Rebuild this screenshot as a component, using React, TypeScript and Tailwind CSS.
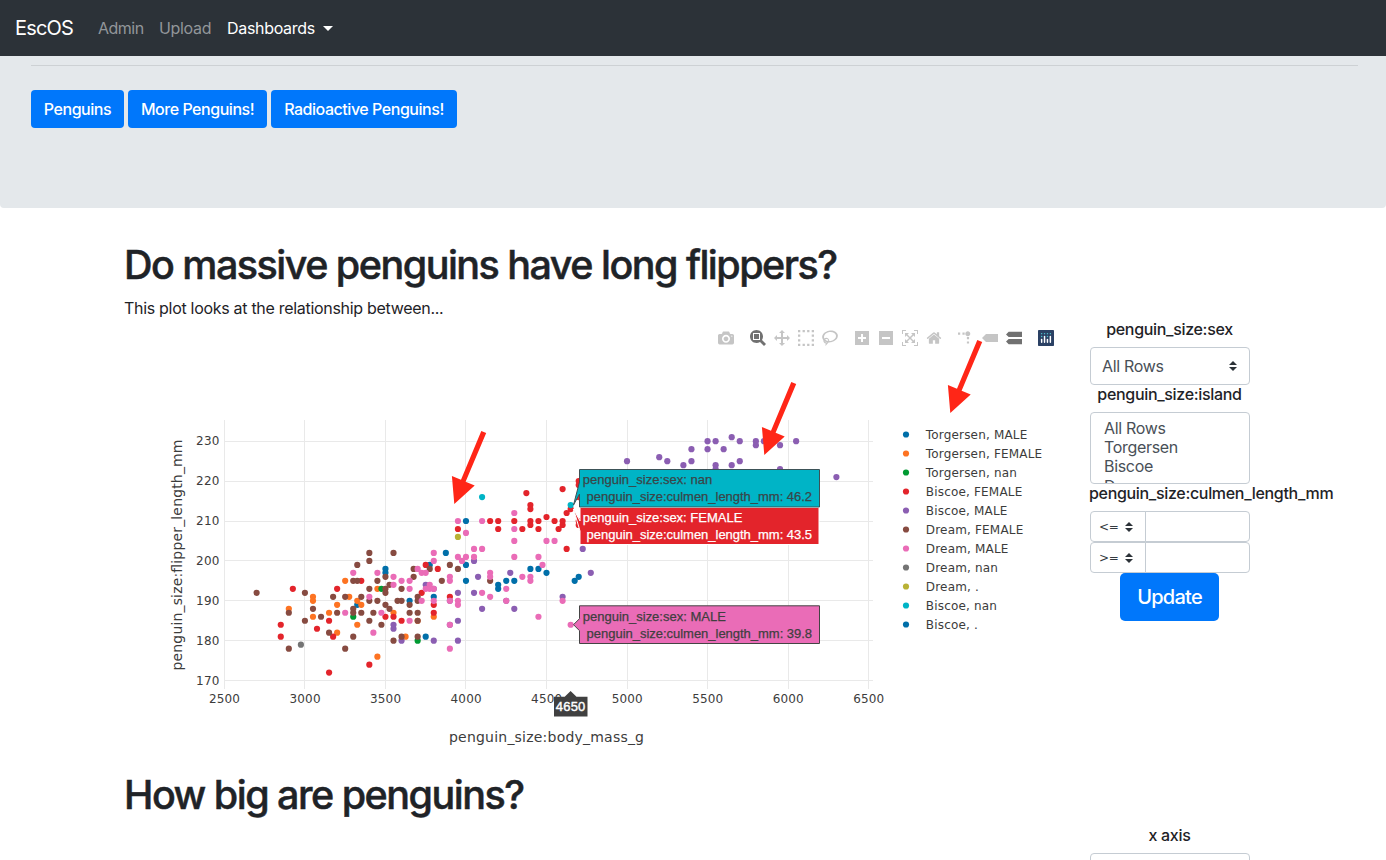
import React from "react";

type Series = { name: string; color: string; points: [number, number[]][] };

const BLUE = "#006fa9";
const ORANGE = "#fd7322";
const GREEN = "#009a32";
const RED = "#e3242b";
const PURPLE = "#8b5eb2";
const BROWN = "#874b41";
const PINK = "#ea6cb7";
const GREY = "#747474";
const OLIVE = "#b9b235";
const CYAN = "#00b4c6";

// Each point entry is [body mass in grams, [flipper lengths in mm]].
const series: Series[] = [
  {
    name: "Torgersen, MALE",
    color: BLUE,
    points: [
      [3325, [189]], [3500, [198, 197]], [3650, [190]], [3750, [181]], [3775, [199]], [3800, [191]],
      [3875, [202]], [4000, [210, 199, 195]], [4200, [194, 193]], [4250, [195]], [4300, [195]],
      [4400, [198]], [4450, [198]], [4500, [197]], [4675, [195]], [4700, [196]],
    ],
  },
  {
    name: "Torgersen, FEMALE",
    color: ORANGE,
    points: [
      [2900, [188]], [3050, [191, 190, 186]], [3150, [187]], [3200, [189, 182]], [3250, [195]],
      [3275, [191]], [3325, [190, 184]], [3350, [189]], [3450, [193, 176]], [3550, [187]],
      [3625, [181]], [3700, [185]], [3800, [186]],
    ],
  },
  { name: "Torgersen, nan", color: GREEN, points: [[3300, [186]], [3475, [193]], [3700, [180]]] },
  {
    name: "Biscoe, FEMALE",
    color: RED,
    points: [
      [2850, [184, 181]], [2925, [193]], [3075, [183]], [3150, [185, 172]], [3175, [181]], [3200, [193]],
      [3350, [195]], [3400, [174]], [3500, [186]], [3550, [186]], [3600, [185]], [3725, [192]],
      [3750, [199]], [3800, [189, 187]], [3825, [198]], [3900, [191]], [3950, [208]], [4150, [210]],
      [4200, [210, 208]], [4300, [210]], [4350, [208]], [4375, [217]], [4400, [214, 213, 210, 209]],
      [4450, [210, 208]], [4500, [211]], [4550, [210]], [4575, [208]], [4600, [218, 210, 209]],
      [4625, [212, 203]], [4650, [213]], [4700, [220, 219, 216, 210, 209]],
    ],
  },
  {
    name: "Biscoe, MALE",
    color: PURPLE,
    points: [
      [3550, [184, 183]], [3600, [180]], [3750, [194]], [3800, [193, 180]], [3900, [190, 184]],
      [3950, [192, 185, 180]], [4050, [200, 192]], [4075, [196]], [4100, [188]], [4250, [190]],
      [4275, [197]], [4300, [188]], [4600, [191]], [4725, [203]], [4775, [197]], [5000, [225]],
      [5200, [226]], [5250, [225]], [5350, [224]], [5400, [228, 225]], [5500, [230, 228]],
      [5550, [230, 224, 223]], [5600, [228]], [5650, [231, 224]], [5700, [230, 225]],
      [5800, [230, 229]], [5850, [230]], [5950, [229, 223]], [6050, [230]], [6300, [221]],
    ],
  },
  {
    name: "Dream, FEMALE",
    color: BROWN,
    points: [
      [2700, [192]], [2900, [187, 178]], [3000, [192, 185]], [3050, [188]], [3100, [186]],
      [3150, [182]], [3175, [191]], [3200, [187]], [3250, [191, 178]], [3300, [195, 188, 187, 181]],
      [3325, [199, 195]], [3350, [191, 187]], [3400, [202, 200, 193, 190, 185]], [3425, [187]],
      [3450, [195, 190]], [3475, [184]], [3500, [196, 193, 192, 189]], [3525, [194, 188]],
      [3550, [202, 180]], [3575, [190]], [3600, [193, 190, 181]], [3650, [189, 187]],
      [3675, [198, 196]], [3700, [191, 190, 187, 185, 181]], [3775, [198]], [3850, [195]],
      [3900, [199]], [3950, [198]], [4150, [195]],
    ],
  },
  {
    name: "Dream, MALE",
    color: PINK,
    points: [
      [3250, [187]], [3300, [197]], [3400, [191]], [3425, [182]], [3450, [197]], [3475, [187]],
      [3550, [196, 194]], [3600, [195]], [3650, [195, 193, 185]], [3700, [198]], [3725, [197, 190]],
      [3750, [197, 193]], [3775, [194, 193]], [3800, [202, 200, 193, 190]],
      [3900, [196, 195, 190, 184, 178]], [3950, [210, 201, 190, 189]], [3975, [200]],
      [4000, [207, 201]], [4050, [203, 201]], [4100, [210, 203, 192]], [4150, [197, 196, 191]],
      [4250, [193, 190]], [4300, [212, 208, 205, 201]], [4350, [196]], [4400, [196, 195]],
      [4450, [201, 186]], [4475, [199]], [4500, [205]], [4550, [205]], [4600, [190]], [4650, [184]],
    ],
  },
  { name: "Dream, nan", color: GREY, points: [[2975, [179]]] },
  { name: "Dream, .", color: OLIVE, points: [[3950, [206]]] },
  { name: "Biscoe, nan", color: CYAN, points: [[4100, [216]], [4650, [214]]] },
  { name: "Biscoe, .", color: BLUE, points: [] },
];

const px = (mass: number) => 224.4 + (mass - 2500) * 0.16105;
const py = (flipper: number) => 441.2 + (230 - flipper) * 3.99;

const massTicks = [2500, 3000, 3500, 4000, 4500, 5000, 5500, 6000, 6500];
const flipperTicks = [170, 180, 190, 200, 210, 220, 230];

function Arrow({ x, y }: { x: number; y: number }) {
  return (
    <path
      transform={`translate(${x} ${y})`}
      fill="#ff2617"
      d="M0 0L-2.4-28L6.7-24.2L27-73L31.9-71L11.3-22.2L20.4-18.4Z"
    />
  );
}

function HoverLabel(props: {
  y: number;
  fill: string;
  stroke: string;
  text: string;
  sex: string;
  length: string;
  sexWidth: number;
  pointer: string;
}) {
  const { y, fill, stroke, text, sex, length, sexWidth, pointer } = props;
  return (
    <g fontFamily="'Liberation Sans', Arial, sans-serif" fontSize="13">
      <path d={pointer} fill={fill} stroke={stroke} />
      <g fill={text} stroke={text} strokeWidth="0.25">
        <text x="582.8" y={y + 15} textLength={sexWidth}>
          penguin_size:sex: {sex}
        </text>
        <text x="586.6" y={y + 32} textLength="225.5">
          penguin_size:culmen_length_mm: {length}
        </text>
      </g>
    </g>
  );
}

function Chart() {
  return (
    <svg
      className="block h-[440px] w-[935px] tracking-normal"
      viewBox="125 320 935 440"
      fontFamily="'DejaVu Sans', Verdana, sans-serif"
      fill="#3c3c3c"
    >
      <g stroke="#e9e9e9" strokeWidth="1">
        {massTicks.map((m) => (
          <line key={m} x1={Math.floor(px(m)) + 0.5} x2={Math.floor(px(m)) + 0.5} y1="420" y2="689" />
        ))}
        {flipperTicks.map((f) => (
          <line key={f} x1="224" x2="873" y1={Math.floor(py(f)) + 0.5} y2={Math.floor(py(f)) + 0.5} />
        ))}
      </g>
      {series.map((s) => (
        <g key={s.name} fill={s.color}>
          {s.points.flatMap(([m, fs]) =>
            fs.map((f) => <circle key={`${m}-${f}`} cx={px(m)} cy={py(f)} r="3.1" />)
          )}
        </g>
      ))}
      <g fontSize="12">
        {massTicks.map((m) => (
          <text key={m} x={px(m) - 15.4} y="703" textLength="31">
            {m}
          </text>
        ))}
        {flipperTicks.map((f) => (
          <text key={f} x="196" y={py(f) + 4.2} textLength="23.5">
            {f}
          </text>
        ))}
      </g>
      <g fontSize="14">
        <text x="449" y="742" textLength="195">
          penguin_size:body_mass_g
        </text>
        <text transform="translate(181.5 670.5) rotate(-90)" textLength="231">
          penguin_size:flipper_length_mm
        </text>
      </g>
      {series.map((s, i) => (
        <g key={s.name} fontSize="12">
          <circle cx="906" cy={434.5 + i * 19} r="3.1" fill={s.color} />
          <text x="925.8" y={439 + i * 19} letterSpacing="0.18">
            {s.name}
          </text>
        </g>
      ))}
      <HoverLabel
        y={507}
        fill={RED}
        stroke="#fff"
        text="#fff"
        sex="FEMALE"
        length="43.5"
        sexWidth={159.5}
        pointer="M573.5 509L580 521V507.5H819V544.5H580V531Z"
      />
      <HoverLabel
        y={469}
        fill={CYAN}
        stroke="#3c5257"
        text="#3a4548"
        sex="nan"
        length="46.2"
        sexWidth={129.5}
        pointer="M573.5 505L579.5 482V469.5H819.5V507H579.5V494Z"
      />
      <HoverLabel
        y={606}
        fill={PINK}
        stroke="#444"
        text="#3f3f3f"
        sex="MALE"
        length="39.8"
        sexWidth={143}
        pointer="M573.5 624.7L579.5 618.7V605.8H819.5V643.5H579.5V630.7Z"
      />
      <path d="M570.6 691L576.5 696.8H587.5V716.5H554V696.8H564.7Z" fill="#404040" />
      <text
        x="555.8"
        y="711.3"
        textLength="29.5"
        fill="#fff"
        stroke="#fff"
        strokeWidth="0.4"
        fontSize="13"
        fontFamily="'Liberation Sans', Arial, sans-serif"
      >
        4650
      </text>
      <Arrow x={454.3} y={504} />
      <Arrow x={764.3} y={455} />
      <Arrow x={950.3} y={413} />
    </svg>
  );
}

const icons = {
  camera: "m500 450c-83 0-150-67-150-150 0-83 67-150 150-150 83 0 150 67 150 150 0 83-67 150-150 150z m400 150h-120c-16 0-34 13-39 29l-31 93c-6 15-23 28-40 28h-340c-16 0-34-13-39-28l-31-94c-6-15-23-28-40-28h-120c-55 0-100-45-100-100v-450c0-55 45-100 100-100h800c55 0 100 45 100 100v450c0 55-45 100-100 100z m-400-550c-138 0-250 112-250 250 0 138 112 250 250 250 138 0 250-112 250-250 0-138-112-250-250-250z m365 380c-19 0-35 16-35 35 0 19 16 35 35 35 19 0 35-16 35-35 0-19-16-35-35-35z",
  zoom: "m1000-25l-250 251c40 63 63 138 63 218 0 224-182 406-407 406-224 0-406-182-406-406s183-406 407-406c80 0 155 22 218 62l250-250 125 125z m-812 250l0 438 437 0 0-438-437 0z m62 375l313 0 0-312-313 0 0 312z",
  pan: "m1000 350l-187 188 0-125-250 0 0 250 125 0-188 187-187-187 125 0 0-250-250 0 0 125-188-188 186-187 0 125 252 0 0-250-125 0 187-188 188 188-125 0 0 250 250 0 0-126 187 188z",
  select: "M0 850h143v-143h-143z M286 850h143v-143h-143z M571 850h143v-143h-143z M857 850h143v-143h-143z M0 564h143v-143h-143z M857 564h143v-143h-143z M0 279h143v-143h-143z M857 279h143v-143h-143z M0-7h143v-143h-143z M286-7h143v-143h-143z M571-7h143v-143h-143z M857-7h143v-143h-143z",
  lasso: "m1018 538c-36 207-290 336-568 286-277-48-473-256-436-463 10-57 36-108 76-151-13-66 11-137 68-183 34-28 75-41 114-42l-55-70 0 0c-2-1-3-2-4-3-10-14-8-34 5-45 14-11 34-8 45 4 1 1 2 3 2 5l0 0 113 140c16 11 31 24 45 40 4 3 6 7 8 11 48-3 100 0 151 9 278 48 473 255 436 462z m-624-379c-80 14-149 48-197 96 42 42 109 47 156 9 33-26 47-66 41-105z m-187-74c-19 16-33 37-39 60 50-32 109-55 174-68-42-25-95-24-135 8z m360 75c-34-7-69-9-102-8 8 62-16 128-68 170-73 59-175 54-244-5-9 20-16 40-20 61-28 159 121 317 333 354s407-60 434-217c28-159-121-318-333-355z",
  plus: "m1 787l0-875 875 0 0 875-875 0z m687-500l-187 0 0-187-125 0 0 187-188 0 0 125 188 0 0 187 125 0 0-187 187 0 0-125z",
  minus: "m0 788l0-876 875 0 0 876-875 0z m688-500l-500 0 0 125 500 0 0-125z",
  autoscale: "m250 850l-187 0-63 0 0-62 0-188 63 0 0 188 187 0 0 62z m688 0l-188 0 0-62 188 0 0-188 62 0 0 188 0 62-62 0z m-875-938l0 188-63 0 0-188 0-62 63 0 187 0 0 62-187 0z m875 188l0-188-188 0 0-62 188 0 62 0 0 62 0 188-62 0z m-125 188l-1 0-93-94-156 156 156 156 92-93 2 0 0 250-250 0 0-2 93-92-156-156-156 156 94 92 0 2-250 0 0-250 0 0 93 93 157-156-157-156-93 94 0 0 0-250 250 0 0 0-94 93 156 157 156-157-93-93 0 0 250 0 0 250z",
  home: "m786 296v-267q0-15-11-26t-25-10h-214v214h-143v-214h-214q-15 0-25 10t-11 26v267q0 1 0 2t0 2l321 264 321-264q1-1 1-4z m124 39l-34-41q-5-5-12-6h-2q-7 0-12 3l-386 322-386-322q-7-4-13-4-7 2-12 7l-35 41q-4 5-3 13t6 12l401 334q18 15 42 15t43-15l136-114v109q0 8 5 13t13 5h107q8 0 13-5t5-13v-227l122-102q5-5 6-12t-4-13z",
  spike: "M512 409c0-57-46-104-103-104-57 0-104 47-104 104 0 57 47 103 104 103 57 0 103-46 103-103z m-327-39l92 0 0 92-92 0z m-185 0l92 0 0 92-92 0z m370-186l92 0 0 93-92 0z m0-184l92 0 0 92-92 0z",
  closest: "m375 725l0 0-375-375 375-374 0-1 1125 0 0 750-1125 0z",
  compare: "m187 786l0 2-187-188 188-187 0 0 937 0 0 373-938 0z m0-499l0 1-187-188 188-188 0 0 937 0 0 376-938-1z",
};

function ModeIcon(props: { d: string; w?: number; active?: boolean; scale?: number }) {
  const { d, w = 1000, active = false, scale = 1 } = props;
  return (
    <svg
      className={active ? "size-4 fill-[#717171]" : "size-4 fill-[#c5c5c5]"}
      viewBox={`0 0 ${w} 1000`}
    >
      <path d={d} transform={`matrix(${scale} 0 0 ${-scale} 0 850)`} />
    </svg>
  );
}

function ModeBar() {
  return (
    <div className="absolute top-[10px] left-[593px] flex gap-4">
      <ModeIcon d={icons.camera} />
      <div className="flex gap-2">
        <ModeIcon d={icons.zoom} active />
        <ModeIcon d={icons.pan} />
        <ModeIcon d={icons.select} />
        <ModeIcon d={icons.lasso} w={1031} />
      </div>
      <div className="flex gap-2">
        <ModeIcon d={icons.plus} w={875} />
        <ModeIcon d={icons.minus} w={875} />
        <ModeIcon d={icons.autoscale} />
        <ModeIcon d={icons.home} w={928.6} />
      </div>
      <div className="flex gap-2">
        <ModeIcon d={icons.spike} scale={1.5} />
        <ModeIcon d={icons.closest} w={1500} />
        <ModeIcon d={icons.compare} w={1125} active />
      </div>
      <svg className="size-4" viewBox="0 0 132 132">
        <rect width="132" height="132" rx="6" fill="#2b4164" />
        <g fill="#4fc3cf">
          <circle cx="102" cy="30" r="6" />
          <circle cx="78" cy="30" r="6" />
          <circle cx="54" cy="30" r="6" />
          <circle cx="30" cy="30" r="6" />
          <circle cx="30" cy="54" r="6" />
          <circle cx="78" cy="54" r="6" />
        </g>
        <g fill="#fff">
          <rect x="24" y="72" width="12" height="36" rx="6" />
          <rect x="48" y="48" width="12" height="60" rx="6" />
          <rect x="72" y="72" width="12" height="36" rx="6" />
          <rect x="96" y="48" width="12" height="60" rx="6" />
        </g>
      </svg>
    </div>
  );
}

function Caret() {
  return (
    <svg className="h-[10px] w-2 shrink-0 fill-[#2c3238]" viewBox="0 0 8 10">
      <path d="M0 4L4 0L8 4ZM0 6L4 10L8 6Z" />
    </svg>
  );
}

function Bound({ op }: { op: string }) {
  return (
    <div className="flex h-[31px] text-[#495057]">
      <div className="flex w-14 items-center justify-between rounded-l border border-[#c5ccd3] pr-3 pl-2">
        <span className="font-['DejaVu_Sans',sans-serif] text-[12px] leading-none text-[#343a40]">{op}</span>
        <Caret />
      </div>
      <div className="-ml-px flex-1 rounded-r border border-[#c5ccd3]" />
    </div>
  );
}

function Filters() {
  return (
    <div className="-mt-[3px] flex w-40 flex-col">
      <div className="flex h-[27px] justify-center pr-px leading-6 font-medium">penguin_size:sex</div>
      <div className="mt-[3px] flex h-[38px] items-center justify-between rounded border border-[#c5ccd3] pr-3 pl-[11px] text-[#495057]">
        <span>All Rows</span>
        <Caret />
      </div>
      <div className="flex h-[27px] justify-center pr-px leading-[19px] font-medium">penguin_size:island</div>
      <div className="h-[72px] overflow-hidden rounded border border-[#c5ccd3] pt-[6px] pl-[13px] leading-[19px] text-[#495057]">
        <div>All Rows</div>
        <div>Torgersen</div>
        <div>Biscoe</div>
        <div className="mt-px">Dream</div>
      </div>
      <div className="-ml-px h-[27px] leading-[19px] font-medium whitespace-nowrap">
        penguin_size:culmen_length_mm
      </div>
      <Bound op="<=" />
      <Bound op=">=" />
      <button className="mr-[31px] ml-[30px] h-12 w-[99px] rounded-[5px] bg-[#0077fb] text-[20px] font-medium tracking-[-0.75px] text-white">
        Update
      </button>
    </div>
  );
}

export default function App() {
  return (
    <div className="h-[860px] w-[1386px] overflow-hidden bg-white font-['Inter',sans-serif] text-[16px] leading-6 tracking-[-0.32px] text-[#1f2327]">
      <nav className="flex h-14 items-center bg-[#2c3238] pl-[15px] text-[#92969a]">
        <span className="w-[83px] text-[20px] tracking-[-0.8px] text-white">EscOS</span>
        <span className="w-[61px] tracking-[-0.5px]">Admin</span>
        <span className="w-[68px]">Upload</span>
        <span className="flex items-center text-white">
          <span className="w-[96px]">Dashboards</span>
          <svg className="h-[5px] w-[10px] fill-white" viewBox="0 0 10 5">
            <path d="M0 0H10L5 5Z" />
          </svg>
        </span>
      </nav>
      <header className="h-[152px] rounded-b bg-[#e4e8eb] pt-[9px] pr-7 pl-[31px]">
        <hr className="border-t border-[#cdd1d4]" />
        <div className="mt-6 flex gap-1 font-medium tracking-[-0.46px] text-white">
          <button className="h-[38px] w-[93px] rounded bg-[#0077fb] whitespace-nowrap">Penguins</button>
          <button className="h-[38px] w-[139px] rounded bg-[#0077fb] whitespace-nowrap">More Penguins!</button>
          <button className="h-[38px] w-[186px] rounded bg-[#0077fb] whitespace-nowrap">Radioactive Penguins!</button>
        </div>
      </header>
      <main className="pt-8 pl-[125px]">
        <h1 className="-ml-px h-14 text-[39.5px] leading-[51px] font-medium tracking-[-1.52px] whitespace-nowrap [-webkit-text-stroke:0.5px_#1f2327]">
          Do massive penguins have long flippers?
        </h1>
        <p className="-ml-px h-6 tracking-[-0.3px]">This plot looks at the relationship between...</p>
        <div className="flex">
          <div className="relative w-[965px]">
            <Chart />
            <ModeBar />
          </div>
          <Filters />
        </div>
        <h1 className="mt-[10px] -ml-px h-[50px] text-[39.5px] leading-[51px] font-medium tracking-[-1.52px] [-webkit-text-stroke:0.5px_#1f2327]">
          How big are penguins?
        </h1>
        <div className="mt-[3px] ml-[965px] w-40">
          <div className="h-[30px] pr-px text-center font-medium">x axis</div>
          <div className="h-[38px] rounded border border-[#c5ccd3]" />
        </div>
      </main>
    </div>
  );
}
